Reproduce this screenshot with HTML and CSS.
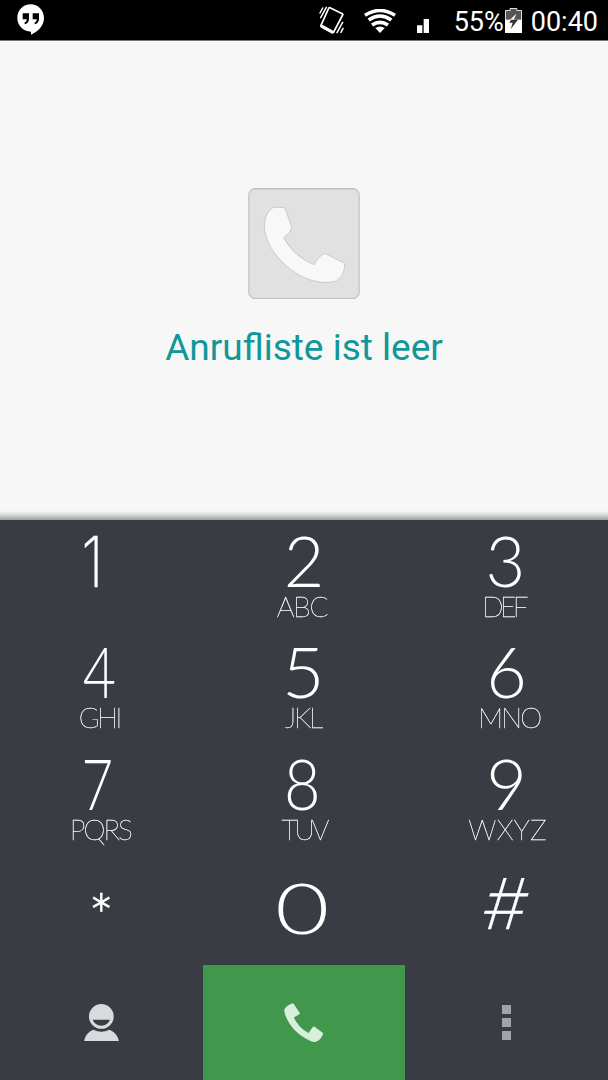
FILE: index.html
```html
<!DOCTYPE html>
<html lang="de">
<head>
  <meta charset="UTF-8" />
  <meta name="viewport" content="width=device-width, initial-scale=1.0"/>
  <title>Telefon</title>
  <link rel="stylesheet" href="styles.css">
</head>
<body>

<div class="phone">
  <header class="statusbar">
    <svg class="hangouts" viewBox="0 0 84 96">
      <path fill="#fff" d="M41 1C18 1 1 19 1 42s17 40 41 41v9c22-10 39-27 39-50C81 19 63 1 41 1z"/>
      <path fill="#000" d="M17 28h19v17c0 9-5 14-13 16v-6c4-1 6-4 6-9H17zM47 28h19v17c0 9-5 14-13 16v-6c4-1 6-4 6-9H47z"/>
    </svg>
    <div class="status-right">
      <svg class="vibrate" viewBox="0 0 75 87">
        <g fill="none" stroke="#fff" stroke-linecap="round">
          <path stroke-width="5" stroke-linejoin="round" d="M33 5L70 23q2 1 1 4L44 78q-1 3-4 2L8 63q-4-2-2-5L29 7q1-3 4-2z"/>
          <path stroke-width="9" d="M11 62l27 15"/>
          <path stroke-width="4.500" d="M3 21l8-15M5 35L22 4M54 80l17-31M66 79l6-12"/>
        </g>
      </svg>
      <svg class="wifi" viewBox="0 0 96 72">
        <path fill="#fff" d="M34 57q14-9 28 0L48 72z"/>
        <g fill="none" stroke="#fff" stroke-width="11">
          <path d="M24 48q24-16 48 0"/>
          <path d="M14 33q34-24 68 0"/>
          <path d="M3 19q45-29 90 0"/>
        </g>
      </svg>
      <svg class="signal" viewBox="0 0 36 42">
        <path fill="#fff" d="M0 19h16v23H0zM20 0h16v42H20z"/>
      </svg>
      <span class="percent">55%</span>
      <svg class="battery" viewBox="0 0 51 75">
        <path fill="#555" d="M0 6h14V0h22v6h15v30H0z"/>
        <path fill="none" stroke="#ddd" stroke-width="3" d="M1.500 36V7.500h14v-6h20v6h14V36"/>
        <path fill="#fff" d="M0 35h51v40H0z"/>
        <path fill="#fff" d="M34 17L14 36h12z"/>
        <path fill="#333" d="M27 35h12L17 64l6-20H13l5-9z"/>
      </svg>
      <span class="clock">00:40</span>
    </div>
  </header>

  <main class="calllog">
    <svg class="calllog-icon" viewBox="0 0 334 333">
      <rect x="1.500" y="1.500" width="331" height="330" rx="19" fill="#e1e1e1" stroke="#c6c6c6" stroke-width="4"/>
      <path fill="none" stroke="#bdbdbd" stroke-width="4" d="M18 2h298"/>
      <path fill="#f8f8f8" stroke="#c9c9c9" stroke-width="3" d="M76 58h33l21 58q-2 18-24 33 32 58 92 81 10-24 32-34l59 30c1 22-7 42-24 52-19 8-43 6-68 1C120 260 50 180 48 116c0-25 10-50 28-58z"/>
    </svg>
    <p class="calllog-text">Anrufliste ist leer</p>
  </main>

  <section class="dialpad">
    <div class="key"><span class="digit one">1</span></div>
    <div class="key"><span class="digit two">2</span><span class="letters abc">ABC</span></div>
    <div class="key"><span class="digit three">3</span><span class="letters def">DEF</span></div>
    <div class="key"><span class="digit four">4</span><span class="letters ghi">GHI</span></div>
    <div class="key"><span class="digit five">5</span><span class="letters jkl">JKL</span></div>
    <div class="key"><span class="digit six">6</span><span class="letters mno">MNO</span></div>
    <div class="key"><span class="digit seven">7</span><span class="letters pqrs">PQRS</span></div>
    <div class="key"><span class="digit eight">8</span><span class="letters tuv">TUV</span></div>
    <div class="key"><span class="digit nine">9</span><span class="letters wxyz">WXYZ</span></div>
    <div class="key"><span class="digit star">*</span></div>
    <div class="key"><span class="digit zero">0</span></div>
    <div class="key"><span class="digit hash">#</span></div>
  </section>

  <nav class="actions">
    <button class="action" aria-label="Kontakte">
      <svg class="contacts" viewBox="0 0 105 112">
        <path fill="#d9dade" fill-rule="evenodd" d="M52 0a37 37 0 1 1 0 75a37 37 0 1 1 0-75zM26 48c4 11 14 18 26 18s22-7 26-18z"/>
        <path fill="#d9dade" d="M0 112c3-16 13-29 28-34 16 8 32 8 48 0 15 5 26 18 29 34z"/>
      </svg>
    </button>
    <button class="action call" aria-label="Anrufen">
      <svg class="handset" viewBox="0 0 116 116">
        <path fill="#d9eedd" d="M22 2q4-3 7 1l17 25q2 4-1 6L29 43q15 31 44 46l12-17q3-3 6-1l23 17q4 3 1 7-8 17-22 21-8 1-20-6C40 95 8 60 1 25 0 15 10 7 22 2z"/>
      </svg>
    </button>
    <button class="action" aria-label="Menü">
      <span class="dots"><i></i><i></i><i></i></span>
    </button>
  </nav>
</div>

</body>
</html>
```
FILE: styles.css
```css
* {
  box-sizing: border-box;
}

body {
  margin: 0;
  background: #393c43;
  font-family: Roboto, sans-serif;
}

.phone {
  width: 608px;
  height: 1080px;
  display: flex;
  flex-direction: column;
  overflow: hidden;
}

.statusbar {
  height: 41px;
  flex: none;
  display: flex;
  justify-content: space-between;
  align-items: flex-start;
  padding: 0 10px 0 17px;
  background: #000;
  border-bottom: 1px solid #777;
  color: #fff;
  font-size: 27px;
  line-height: 44px;
}

.hangouts {
  width: 28px;
  height: 32px;
  margin-top: 4px;
}

.status-right {
  display: flex;
}

.vibrate {
  width: 25px;
  height: 29px;
  margin: 6px 20px 0 0;
}

.wifi {
  width: 32px;
  height: 24px;
  margin: 9px 21px 0 0;
}

.signal {
  width: 12px;
  height: 14px;
  margin: 19px 25px 0 0;
}

.battery {
  width: 17px;
  height: 25px;
  margin: 8px 9px 0 1px;
}

.calllog {
  height: 479px;
  flex: none;
  display: flex;
  flex-direction: column;
  align-items: center;
  padding-top: 147px;
  background: linear-gradient(to bottom, transparent 470px, #d8d9d6 474px, #9c9f9b 479px), #f7f7f7;
}

.calllog-icon {
  width: 112px;
  height: 111px;
}

.calllog-text {
  margin: 25px 0 0;
  font-size: 37px;
  line-height: 48px;
  color: #10979a;
}

.dialpad {
  height: 445px;
  flex: none;
  display: grid;
  grid-template-columns: repeat(3, 1fr);
  grid-template-rows: repeat(4, 1fr);
  color: #fff;
  font-family: Lato, sans-serif;
  will-change: transform;
}

.key {
  display: flex;
  flex-direction: column;
  align-items: center;
}

.digit {
  font-size: 70px;
  font-weight: 300;
  line-height: 80px;
}

.one,
.star,
.hash {
  font-family: Inter, sans-serif;
  font-weight: 200;
}

.one {
  transform: translate(-9px, 2px) scaleX(0.84);
  -webkit-text-stroke: 0.3px #fff;
}

.three {
  transform: translateX(-1px) scaleX(0.98);
}

.four {
  transform: translateX(-2px) scaleX(0.82);
}

.five {
  transform: translateX(-1px) scaleX(1.05);
}

.seven {
  transform: translateX(-4px) scaleX(0.78);
}

.eight {
  transform: translateX(-2px) scaleX(0.9);
}

.star {
  font-size: 44px;
  transform: translateY(15px);
  -webkit-text-stroke: 0.7px #fff;
}

.zero {
  transform: translate(-2px, 13px) scaleX(1.34);
}

.hash {
  transform: translateY(10px) skewX(-8deg);
  -webkit-text-stroke: 0.3px #fff;
}

.letters {
  font-size: 28px;
  font-weight: 100;
  line-height: 12px;
  letter-spacing: -0.7px;
  -webkit-text-stroke: 0.3px #fff;
}

.abc {
  letter-spacing: -1.2px;
  margin-right: 4px;
}

.def {
  letter-spacing: -3.500px;
  margin-right: 6px;
}

.ghi {
  letter-spacing: -2.500px;
  margin-right: 4px;
}

.jkl {
  letter-spacing: -2px;
  margin-right: 2px;
}

.mno {
  letter-spacing: -2px;
  margin-left: 5px;
}

.pqrs {
  letter-spacing: -2px;
  margin-right: 2px;
}

.tuv {
  letter-spacing: -3px;
}

.wxyz {
  letter-spacing: 0.3px;
  margin-left: 2px;
}

.actions {
  flex: 1;
  display: grid;
  grid-template-columns: repeat(3, 1fr);
}

.action {
  display: flex;
  justify-content: center;
  align-items: center;
  padding: 0;
  border: none;
  background: #393c43;
}

.call {
  background: #41984c;
}

.contacts {
  width: 35px;
  height: 37px;
}

.handset {
  width: 39px;
  height: 39px;
}

.dots {
  display: flex;
  flex-direction: column;
  gap: 4px;
}

.dots i {
  width: 9px;
  height: 9px;
  background: #a0a3a8;
}
```
